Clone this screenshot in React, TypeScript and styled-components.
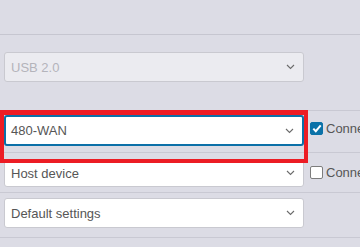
import React from "react";
import styled, { createGlobalStyle } from "styled-components";

const Global = createGlobalStyle`
  html, body { margin: 0; padding: 0; background: #dcdce5; }
  body { font-family: "Liberation Sans", Arial, sans-serif; width: 360px; height: 247px; overflow: hidden; }
`;

const Page = styled.div`
  display: flex;
  flex-direction: column;
  width: 360px;
  overflow: hidden;
`;

const Header = styled.div`
  height: 34px;
  border-bottom: 1px solid #c6c6d0;
`;

const Row = styled.div<{ $h: number; $pt: number }>`
  position: relative;
  display: flex;
  align-items: flex-start;
  gap: 6px;
  height: ${(p) => p.$h}px;
  padding: ${(p) => p.$pt}px 0 0 4px;
  box-sizing: border-box;
  border-bottom: 1px solid #c9c9d3;
`;

const SelectBox = styled.div<{ $disabled?: boolean; $focused?: boolean; $h?: number }>`
  position: relative;
  width: 300px;
  height: ${(p) => p.$h ?? 30}px;
  box-sizing: border-box;
  display: flex;
  align-items: center;
  border-radius: 3px;
  background: ${(p) => (p.$disabled ? "#ebebf0" : "#ffffff")};
  border: ${(p) => (p.$focused ? "2px solid #0b70a8" : "1px solid #c9c9d0")};
  padding-left: ${(p) => (p.$focused ? 5 : 6)}px;
  color: ${(p) => (p.$disabled ? "#b4b4bb" : "#565656")};
  font-size: 13px;
  flex-shrink: 0;
`;

const Chevron = styled.svg`
  position: absolute;
  right: 8px;
  top: 50%;
  margin-top: -3px;
`;

const CheckLabel = styled.label`
  display: flex;
  align-items: center;
  gap: 3px;
  margin-top: 6px;
  font-size: 13px;
  color: #565656;
  white-space: nowrap;
`;

const Box = styled.span<{ $checked?: boolean }>`
  width: 13px;
  height: 13px;
  box-sizing: border-box;
  border-radius: 2px;
  display: inline-flex;
  align-items: center;
  justify-content: center;
  background: ${(p) => (p.$checked ? "#0b72a8" : "#ffffff")};
  border: 1px solid ${(p) => (p.$checked ? "#0b72a8" : "#7d7d7d")};
`;

const Highlight = styled.div`
  position: absolute;
  z-index: 1;
  left: 0;
  top: -1px;
  width: 308px;
  height: 53px;
  box-sizing: border-box;
  border: 4px solid #ec1c24;
  border-top-width: 5px;
  pointer-events: none;
`;

const ChevronIcon = () => (
  <Chevron width="9" height="6" viewBox="0 0 9 6">
    <path d="M1 1 L4.5 4.5 L8 1" fill="none" stroke="#6b6b6b" strokeWidth="1.1" />
  </Chevron>
);

const Select = (props: { label: string; disabled?: boolean; focused?: boolean; h?: number }) => (
  <SelectBox $disabled={props.disabled} $focused={props.focused} $h={props.h}>
    {props.label}
    <ChevronIcon />
  </SelectBox>
);

const Check = ({ checked }: { checked?: boolean }) => (
  <CheckLabel>
    <Box $checked={checked}>
      {checked && (
        <svg width="10" height="9" viewBox="0 0 10 9">
          <path d="M1.3 4.6 L3.8 7.2 L8.7 1.4" fill="none" stroke="#fff" strokeWidth="2" />
        </svg>
      )}
    </Box>
    Connected
  </CheckLabel>
);

export default function App() {
  return (
    <>
      <Global />
      <Page>
        <Header />
        <Row $h={76} $pt={17}>
          <Select label="USB 2.0" disabled />
        </Row>
        <Row $h={42} $pt={4}>
          <Select label="480-WAN" focused h={31} />
          <Check checked />
          <Highlight />
        </Row>
        <Row $h={40} $pt={6}>
          <Select label="Host device" h={28} />
          <Check />
        </Row>
        <Row $h={45} $pt={5}>
          <Select label="Default settings" />
        </Row>
      </Page>
    </>
  );
}
